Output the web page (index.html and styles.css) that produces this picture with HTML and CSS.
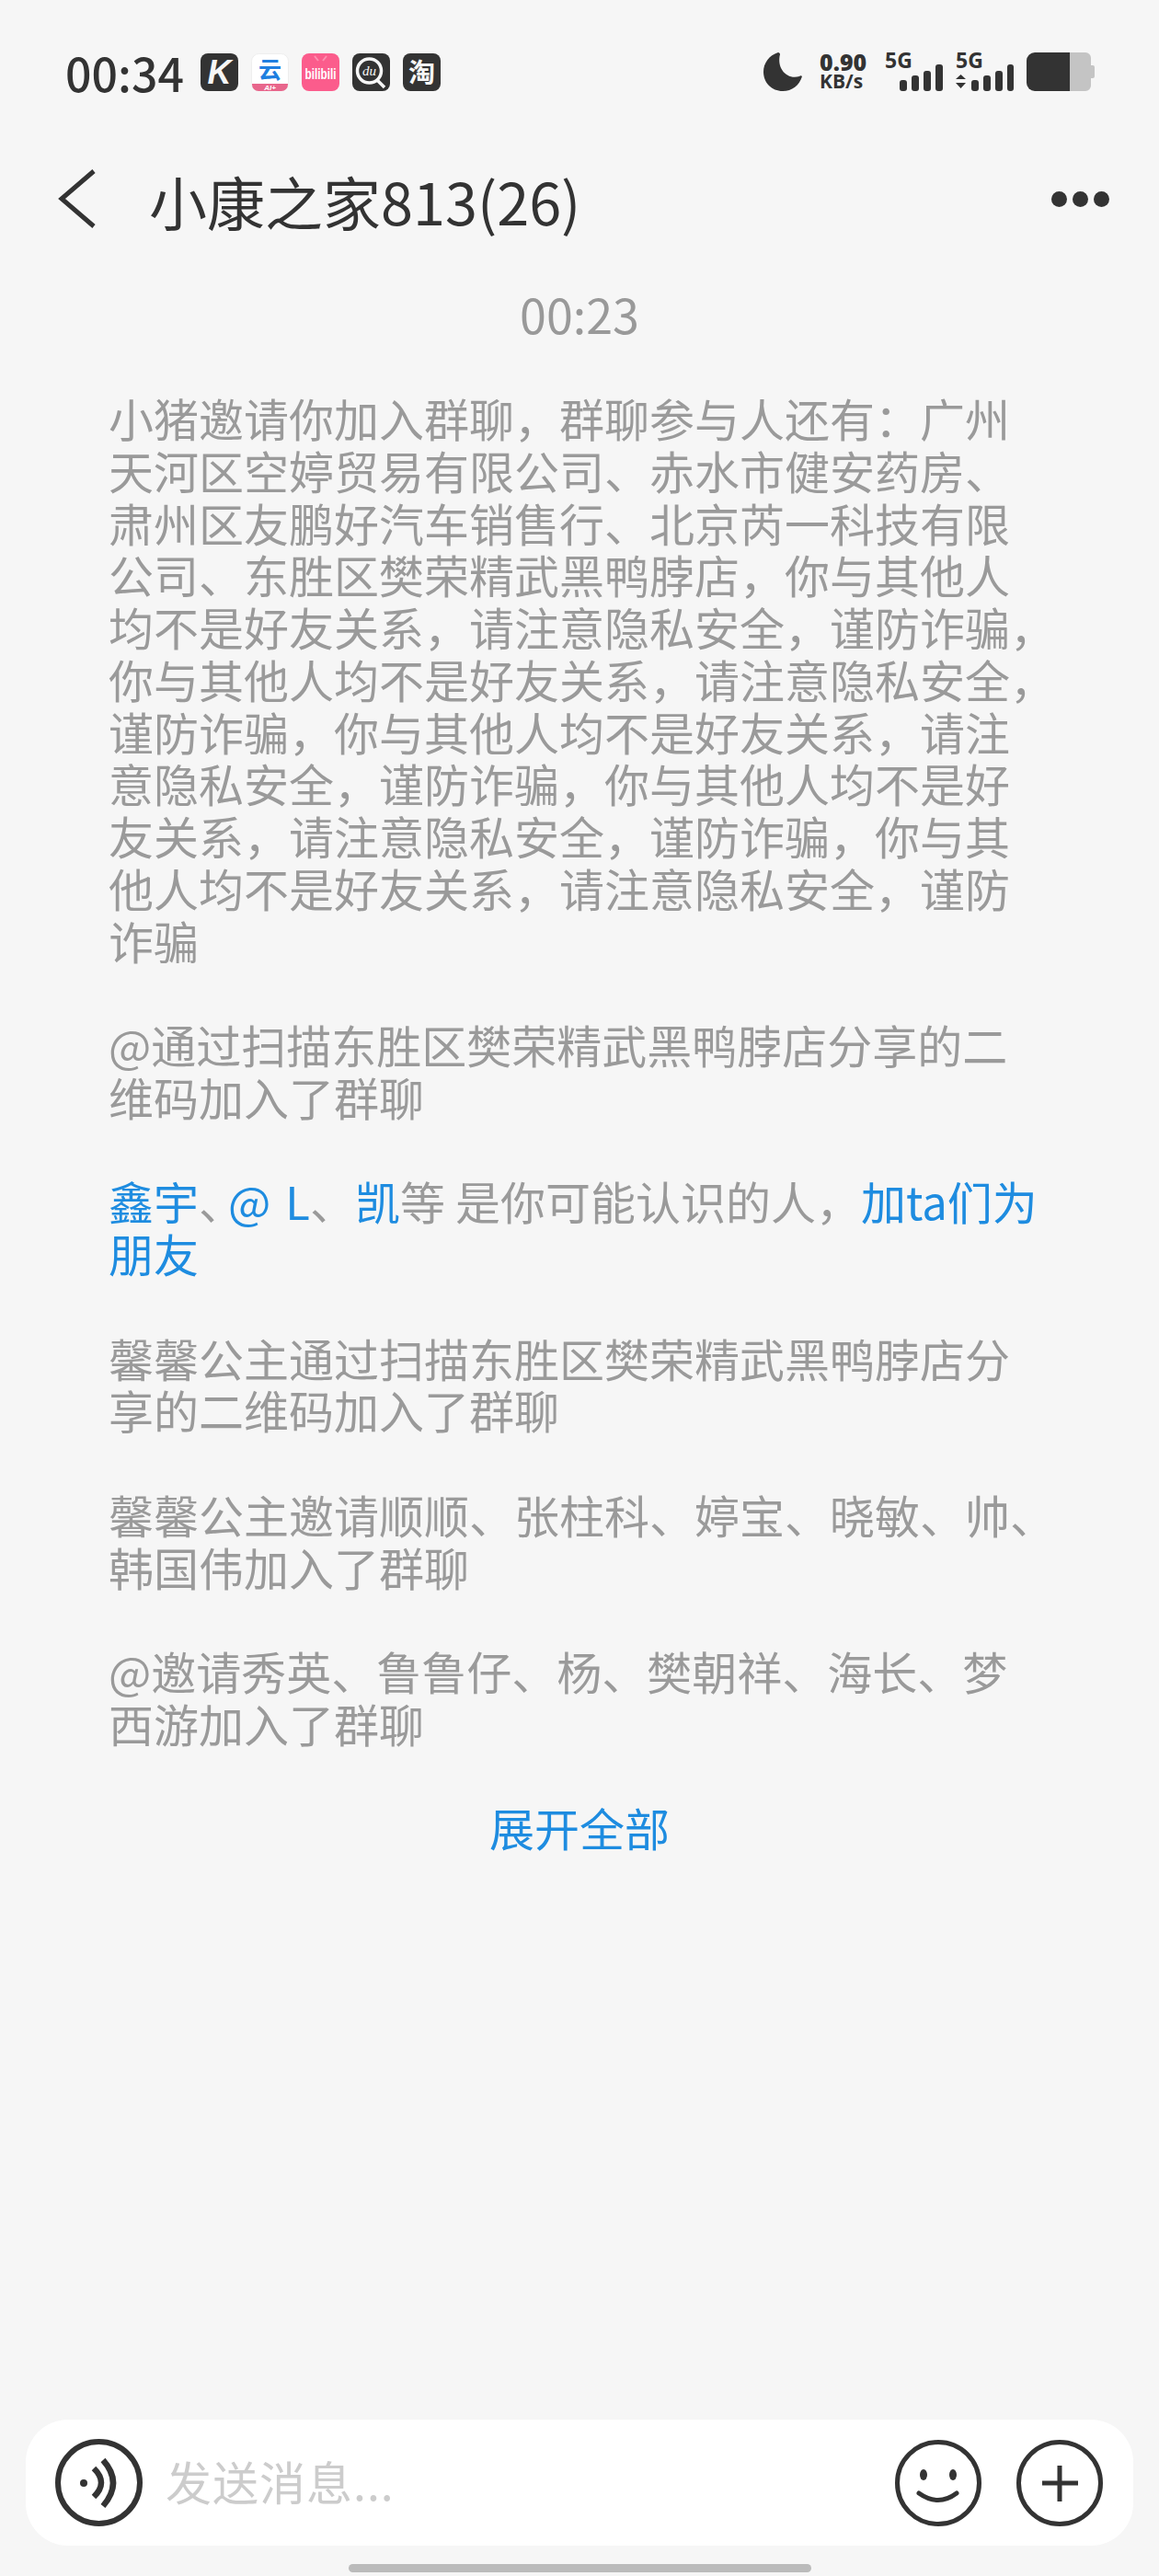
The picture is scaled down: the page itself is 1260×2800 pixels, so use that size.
FILE: index.html
```html
<!DOCTYPE html>
<html lang="zh">
<head>
<meta charset="utf-8">
<title>小康之家813(26)</title>
<link rel="stylesheet" href="styles.css">
</head>
<body>
<div class="page">

  <!-- status bar -->
  <div class="statusbar">
    <div class="status-left">
      <span class="clock">00:34</span>
      <div class="app-icons">
        <svg class="app" viewBox="0 0 41 41"><rect width="41" height="41" rx="8" fill="#333"/><text x="20.5" y="33" class="app-k">K</text></svg>
        <svg class="app" viewBox="0 0 41 41"><rect x=".5" y=".5" width="40" height="40" rx="8" fill="#fff" stroke="#eee"/><path d="M1 33h39v1a7 7 0 0 1-7 7H8a7 7 0 0 1-7-7z" fill="#e8668c"/><text x="20.5" y="27" class="app-yun">云</text><text x="20.5" y="40" class="app-ai">AI+</text></svg>
        <svg class="app" viewBox="0 0 41 41"><rect width="41" height="41" rx="8" fill="#fb5c8c"/><path d="M14 3l4 5M27 3l-4 5" stroke="#fd8fb0" stroke-width="2"/><text x="20.5" y="28" class="app-bili" textLength="34" lengthAdjust="spacingAndGlyphs">bilibili</text></svg>
        <svg class="app" viewBox="0 0 41 41"><rect width="41" height="41" rx="8" fill="#333"/><circle cx="18.5" cy="19" r="13" fill="none" stroke="#f6f6f6" stroke-width="3.5"/><path d="M27 29l8 8" stroke="#f6f6f6" stroke-width="3.5"/><text x="18.5" y="24" class="app-du">du</text></svg>
        <svg class="app" viewBox="0 0 41 41"><rect width="41" height="41" rx="8" fill="#333"/><text x="20.5" y="32" class="app-tao">淘</text></svg>
      </div>
    </div>
    <div class="status-right">
      <svg class="moon" viewBox="0 0 42 42"><path d="M16 0C6 3 0 12 0 21c0 12 9 21 21 21 10 0 18-6 21-16-1-1-2-1-3 0C26 30 14 18 18 2c0-1-1-2-2-2z" fill="#333"/></svg>
      <div class="speed"><b>0.90</b><span>KB/s</span></div>
      <svg class="signal" viewBox="0 0 63 42">
        <text x="0" y="17" class="net">5G</text>
        <rect x="16" y="30" width="8" height="12" rx="3" fill="#333"/>
        <rect x="29" y="25" width="8" height="17" rx="3" fill="#333"/>
        <rect x="42" y="20" width="8" height="22" rx="3" fill="#333"/>
        <rect x="55" y="13" width="8" height="29" rx="3" fill="#333"/>
      </svg>
      <svg class="signal" viewBox="0 0 63 42">
        <text x="0" y="17" class="net">5G</text>
        <path d="M0 29l5.500-5 5.500 5zM0 33h11l-5.500 6z" fill="#333"/>
        <rect x="17" y="30" width="8" height="12" rx="3" fill="#333"/>
        <rect x="30" y="25" width="8" height="17" rx="3" fill="#333"/>
        <rect x="43" y="20" width="8" height="22" rx="3" fill="#333"/>
        <rect x="56" y="13" width="7" height="29" rx="3" fill="#333"/>
      </svg>
      <svg class="battery" viewBox="0 0 74 42">
        <path d="M47 0h17a6 6 0 0 1 6 6v8h2a2 2 0 0 1 2 2v10a2 2 0 0 1-2 2h-2v8a6 6 0 0 1-6 6H47z" fill="#c4c4c4"/>
        <path d="M9 0h38v42H9a9 9 0 0 1-9-9V9a9 9 0 0 1 9-9z" fill="#333"/>
      </svg>
    </div>
  </div>

  <!-- title -->
  <div class="header">
    <svg class="back" viewBox="0 0 42 64"><path d="M39 2L4 32l35 30" fill="none" stroke="#333" stroke-width="5"/></svg>
    <div class="title">小康之家813(26)</div>
    <div class="more"><i></i><i></i><i></i></div>
  </div>

  <div class="timestamp">00:23</div>

  <div class="notices">
    <p>小猪邀请你加入群聊，群聊参与人还有：广州<br>
    天河区空婷贸易有限公司、赤水市健安药房、<br>
    肃州区友鹏好汽车销售行、北京芮一科技有限<br>
    公司、东胜区樊荣精武黑鸭脖店，你与其他人<br>
    均不是好友关系，请注意隐私安全，谨防诈骗，<br>
    你与其他人均不是好友关系，请注意隐私安全，<br>
    谨防诈骗，你与其他人均不是好友关系，请注<br>
    意隐私安全，谨防诈骗，你与其他人均不是好<br>
    友关系，请注意隐私安全，谨防诈骗，你与其<br>
    他人均不是好友关系，请注意隐私安全，谨防<br>
    诈骗</p>
    <p>@通过扫描东胜区樊荣精武黑鸭脖店分享的二<br>
    维码加入了群聊</p>
    <p><a>鑫宇</a><span class="sep-tight">、</span><a class="at-name">@ L</a>、<a>凯</a>等 是你可能认识的人，<a>加ta们为<br>
    朋友</a></p>
    <p>馨馨公主通过扫描东胜区樊荣精武黑鸭脖店分<br>
    享的二维码加入了群聊</p>
    <p>馨馨公主邀请顺顺、张柱科、婷宝、晓敏、帅、<br>
    韩国伟加入了群聊</p>
    <p>@邀请秀英、鲁鲁仔、杨、樊朝祥、海长、梦<br>
    西游加入了群聊</p>
  </div>

  <div class="expand">展开全部</div>

  <!-- input bar -->
  <div class="inputbar">
    <svg class="voice" viewBox="0 0 95 95">
      <circle cx="47.500" cy="47.500" r="44.500" fill="none" stroke="#333" stroke-width="6"/>
      <circle cx="31" cy="48" r="4" fill="#333"/>
      <path d="M42 32Q58 47.500 42 63M52 23Q74 47.500 52 73" fill="none" stroke="#333" stroke-width="6.500"/>
    </svg>
    <div class="placeholder">发送消息...</div>
    <svg class="round-btn" viewBox="0 0 94 94">
      <circle cx="47" cy="47" r="44.500" fill="none" stroke="#333" stroke-width="5"/>
      <ellipse cx="31" cy="38" rx="4" ry="6" fill="#333"/>
      <ellipse cx="63" cy="38" rx="4" ry="6" fill="#333"/>
      <path d="M26 58Q47 73 67 58" fill="none" stroke="#333" stroke-width="5" stroke-linecap="round"/>
    </svg>
    <svg class="round-btn" viewBox="0 0 94 94">
      <circle cx="47" cy="47" r="44.500" fill="none" stroke="#333" stroke-width="5"/>
      <path d="M28 47h39M47 28v39" fill="none" stroke="#333" stroke-width="5"/>
    </svg>
  </div>

  <div class="homebar"></div>
</div>
</body>
</html>
```

FILE: styles.css
```css
body {
  margin: 0;
  background-color: #f6f6f6;
  font-family: "Noto Sans CJK SC", "Noto Sans", sans-serif;
  color: #333;
}

.page {
  height: 2800px;
  display: flex;
  flex-direction: column;
  overflow: hidden;
}

/* Status bar */
.statusbar {
  display: flex;
  justify-content: space-between;
  align-items: center;
  height: 42px;
  margin-top: 57px;
  padding: 0 70px 0 71px;
}

.status-left,
.status-right {
  display: flex;
  align-items: center;
}

.clock {
  width: 147px;
  font-size: 50px;
  font-weight: 500;
  line-height: 42px;
}

.app-icons {
  display: flex;
  gap: 14px;
}

.app {
  width: 41px;
  height: 41px;
}

.app text {
  text-anchor: middle;
}

.app-k {
  font: italic 700 36px "Liberation Sans", sans-serif;
  fill: #f6f6f6;
}

.app-yun {
  font: 700 25px "Noto Sans CJK SC", sans-serif;
  fill: #1f7fe0;
}

.app-ai {
  font: italic 700 8px "Liberation Sans", sans-serif;
  fill: #fff;
}

.app-bili {
  font: 700 16px "Liberation Sans", sans-serif;
  fill: #fff;
}

.app-du {
  font: italic 400 15px "Liberation Serif", serif;
  fill: #f6f6f6;
}

.app-tao {
  font: 700 29px "Noto Sans CJK SC", sans-serif;
  fill: #f6f6f6;
}

.moon {
  width: 42px;
  height: 42px;
  margin-right: 19px;
}

.speed {
  width: 71px;
  display: flex;
  flex-direction: column;
  font-family: "Open Sans", sans-serif;
  font-weight: 700;
  line-height: 21px;
}

.speed b {
  font-size: 25px;
}

.speed span {
  font-size: 21px;
}

.signal {
  width: 63px;
  height: 42px;
  margin-right: 14px;
}

.net {
  font: 700 23px "Open Sans", sans-serif;
  fill: #333;
}

.battery {
  width: 74px;
  height: 42px;
}

/* Header */
.header {
  display: flex;
  align-items: center;
  height: 100px;
  margin-top: 67px;
  padding: 0 54px 0 63px;
}

.back {
  width: 42px;
  height: 66px;
  margin-right: 57px;
}

.title {
  flex: 1;
  padding-top: 3px;
  font-size: 63px;
  line-height: 97px;
}

.more {
  display: flex;
  gap: 6px;
}

.more i {
  width: 17px;
  height: 17px;
  border-radius: 50%;
  background-color: #333;
}

.timestamp {
  margin-top: 46px;
  text-align: center;
  font-size: 52px;
  line-height: 57px;
  color: #999;
}

/* Group notices */
.notices {
  margin-top: 57px;
  padding-left: 118px;
  font-size: 49px;
  line-height: 56.75px;
  color: #9a9a9a;
  white-space: nowrap;
}

.notices p {
  margin: 0 0 56.75px 0;
}

.notices p:last-child {
  margin-bottom: 0;
}

.notices a {
  color: #1e8ce0;
}

/* the first name separator sits tight against the @ */
.sep-tight {
  letter-spacing: -17px;
}

.at-name {
  word-spacing: 5px;
}

.expand {
  margin-top: 55px;
  text-align: center;
  font-size: 49px;
  line-height: 57px;
  color: #1e8ce0;
}

/* Input bar */
.inputbar {
  display: flex;
  align-items: center;
  height: 137px;
  margin: auto 28px 0 28px;
  padding: 0 33px 0 32px;
  background-color: #fff;
  border-radius: 46px;
}

.voice {
  width: 95px;
  height: 95px;
  margin-right: 25px;
}

.placeholder {
  flex: 1;
  padding-bottom: 6px;
  font-size: 50px;
  letter-spacing: 1px;
  color: #ccc;
}

.round-btn {
  width: 94px;
  height: 94px;
  margin-left: 38px;
}

.homebar {
  width: 503px;
  height: 9px;
  margin: 20px auto 4px auto;
  border-radius: 5px;
  background-color: #bbb;
}
```
